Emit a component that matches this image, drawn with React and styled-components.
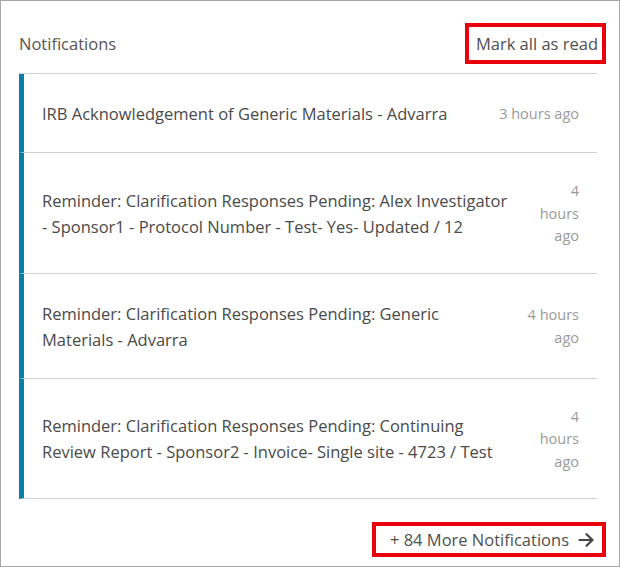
import React from 'react';
import styled, { createGlobalStyle } from 'styled-components';

const GlobalStyle = createGlobalStyle`
  body {
    margin: 0;
    font-family: 'Open Sans', 'Noto Sans', sans-serif;
    background: #fff;
  }
`;

const Panel = styled.div`
  width: 620px;
  height: 567px;
  box-sizing: border-box;
  border: 1px solid #a6a6a6;
  padding: 0 22px 0 18px;
  display: flex;
  flex-direction: column;
  color: #4a4a4a;
`;

const Header = styled.div`
  display: flex;
  align-items: center;
  justify-content: space-between;
  padding: 22px 0 9px;
`;

const Title = styled.span`
  font-size: 16.5px;
  line-height: 20px;
  color: #555;
`;

// red outline is the annotation box drawn round the actions in the screenshot
const Highlighted = styled.button`
  font: inherit;
  font-size: 16.5px;
  line-height: ${({ compact }) => (compact ? '22px' : '25px')};
  color: #505050;
  background: none;
  border: 4px solid #e8000b;
  padding: ${({ compact }) => (compact ? '3px 8px 2px 14px' : '4px 4px 4px 7px')};
  margin-right: -9px;
  cursor: pointer;
  display: flex;
  align-items: center;
  gap: 9px;
`;

const List = styled.ul`
  list-style: none;
  margin: 0;
  padding: 0;
  border-top: 1px solid #cdd1d5;
`;

const Item = styled.li`
  display: flex;
  align-items: center;
  gap: 24px;
  border-left: 5px solid #0a7fa5;
  border-bottom: 1px solid #cdd1d5;
  padding: 27px 18px 25px;
`;

const Message = styled.div`
  flex: 1;
  font-size: 16.5px;
  line-height: 26px;
  color: #4a4a4a;
`;

const Time = styled.div`
  width: ${({ width }) => (width ? `${width}px` : 'auto')};
  flex-shrink: 0;
  text-align: right;
  font-size: 14.5px;
  line-height: 22.5px;
  color: #9a9a9a;
`;

const Footer = styled.div`
  display: flex;
  justify-content: flex-end;
  margin-top: 23px;
`;

const Arrow = () => (
  <svg width="16" height="14" viewBox="0 0 16 14" fill="none" stroke="#444" strokeWidth="2.2" strokeLinecap="round" strokeLinejoin="round">
    <path d="M1.5 7h13M8.5 1.2 14.5 7l-6 5.8" />
  </svg>
);

const notifications = [
  { id: 1, text: 'IRB Acknowledgement of Generic Materials - Advarra', time: '3 hours ago' },
  {
    id: 2,
    text: 'Reminder: Clarification Responses Pending: Alex Investigator - Sponsor1 - Protocol Number - Test- Yes- Updated / 12',
    time: '4 hours ago',
    timeWidth: 44,
  },
  {
    id: 3,
    text: 'Reminder: Clarification Responses Pending: Generic Materials - Advarra',
    time: '4 hours ago',
    timeWidth: 60,
  },
  {
    id: 4,
    text: 'Reminder: Clarification Responses Pending: Continuing Review Report - Sponsor2 - Invoice- Single site - 4723 / Test',
    time: '4 hours ago',
    timeWidth: 44,
  },
];

export default function App() {
  return (
    <>
      <GlobalStyle />
      <Panel>
        <Header>
          <Title>Notifications</Title>
          <Highlighted>Mark all as read</Highlighted>
        </Header>
        <List>
          {notifications.map((n) => (
            <Item key={n.id}>
              <Message>{n.text}</Message>
              <Time width={n.timeWidth}>{n.time}</Time>
            </Item>
          ))}
        </List>
        <Footer>
          <Highlighted compact>
            + 84 More Notifications
            <Arrow />
          </Highlighted>
        </Footer>
      </Panel>
    </>
  );
}
